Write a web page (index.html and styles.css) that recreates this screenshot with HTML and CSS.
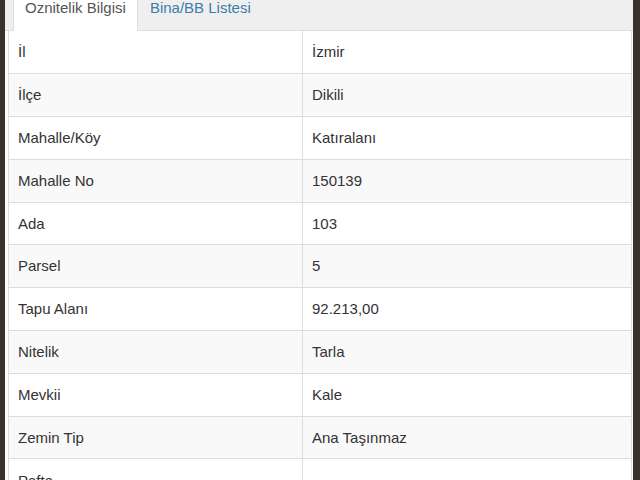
FILE: index.html
```html
<!DOCTYPE html>
<html>
<head>
<meta charset="utf-8" />
<title>Öznitelik Bilgisi</title>
<link rel="stylesheet" href="styles.css">
</head>
<body>
<div class="panel">
	<ul class="tabs">
		<li class="active"><a href="#">Oznitelik Bilgisi</a></li>
		<li><a href="#">Bina/BB Listesi</a></li>
	</ul>
	<table class="info">
		<tr><td class="key">İl</td><td>İzmir</td></tr>
		<tr><td class="key">İlçe</td><td>Dikili</td></tr>
		<tr><td class="key">Mahalle/Köy</td><td>Katıralanı</td></tr>
		<tr><td class="key">Mahalle No</td><td>150139</td></tr>
		<tr><td class="key">Ada</td><td>103</td></tr>
		<tr><td class="key">Parsel</td><td>5</td></tr>
		<tr><td class="key">Tapu Alanı</td><td>92.213,00</td></tr>
		<tr><td class="key">Nitelik</td><td>Tarla</td></tr>
		<tr><td class="key">Mevkii</td><td>Kale</td></tr>
		<tr><td class="key">Zemin Tip</td><td>Ana Taşınmaz</td></tr>
		<tr><td class="key">Pafta</td><td></td></tr>
	</table>
</div>
</body>
</html>
```

FILE: styles.css
```css
*{ margin:0; padding:0; box-sizing:border-box;}
html, body{ height:100%; overflow:hidden;}
body{ background:#3a322a; font-family:"Liberation Sans", Arial, sans-serif; font-size:15px; color:#333;}

.panel{ margin-left:5px; width:628px; height:480px; background:#fff; overflow:hidden; padding:0 1px 0 3px;}

.tabs{ list-style:none; display:flex; height:31px; margin:0 -1px 0 -3px; padding-left:8px; background:#efefef; border-bottom:1px solid #ddd;}
.tabs a{ display:block; height:31px; padding:0 11px; line-height:20px; margin-top:-3px; white-space:nowrap; text-decoration:none; color:#3b7dab; border:1px solid transparent;}
.tabs li.active a{ background:#fff; color:#555; border-color:#ddd; border-bottom-color:#fff; height:34px;}

.info{ width:100%; border-collapse:collapse; border-right:1px solid #ddd; border-left:1px solid #ddd;}
.info tr{ height:42.8px;}
.info tr:nth-child(even){ background:#f9f9f9;}
.info td{ border-top:1px solid #ddd; padding:0 10px 0 9px; line-height:20px; vertical-align:middle;}
.info tr:first-child td{ border-top:none;}
.info td.key{ width:294px; border-right:1px solid #ddd;}
```
